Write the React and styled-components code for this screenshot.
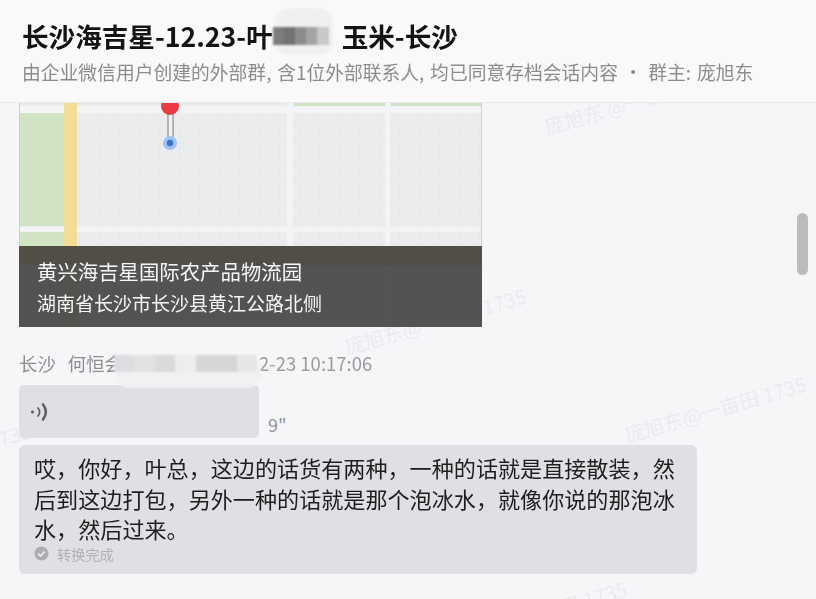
import React from "react";
import styled, { createGlobalStyle } from "styled-components";

const Global = createGlobalStyle`
  html, body { margin: 0; padding: 0; background: #f6f6f9; }
  * { box-sizing: border-box; }
  body { font-family: "Noto Sans CJK SC", "Noto Sans", sans-serif; overflow: hidden; }
`;

const Page = styled.div`
  width: 816px;
  height: 599px;
  display: flex;
  flex-direction: column;
  position: relative;
  overflow: hidden;
  background: #f6f6f9;
`;

const Header = styled.header`
  height: 103px;
  flex: none;
  padding: 17px 22px 0;
  background: #f9f9fa;
  border-bottom: 1px solid #e9e9eb;
  position: relative;
  z-index: 3;
`;

const Title = styled.h1`
  margin: 0;
  height: 38px;
  display: flex;
  align-items: center;
  font-size: 26.6px;
  line-height: 38px;
  font-weight: 700;
  color: #141414;
  white-space: nowrap;
  filter: blur(0.35px);
`;

const Subtitle = styled.p`
  margin: 5px 0 0;
  font-size: 18.8px;
  line-height: 24px;
  word-spacing: 1.6px;
  color: #8b8c8e;
  white-space: nowrap;
  filter: blur(0.35px);
`;

const Mosaic = styled.span`
  display: inline-flex;
  align-items: center;
  position: relative;
  width: ${(p) => p.$width}px;
  margin-left: ${(p) => p.$before || 0}px;
  margin-right: ${(p) => p.$after || 0}px;
  height: ${(p) => p.$height}px;
  flex: none;
  filter: blur(1px);
  z-index: 1;
`;

const MosaicHalo = styled.i`
  position: absolute;
  left: 2px;
  right: -4px;
  top: ${(p) => p.$top}px;
  bottom: ${(p) => p.$bottom}px;
  border-radius: 14px;
  background: ${(p) => p.$color};
  z-index: -1;
`;

const MosaicCell = styled.i`
  display: block;
  flex: 1;
  height: 100%;
  background: ${(p) => p.$color};
`;

const Scroller = styled.main`
  flex: 1;
  min-height: 0;
  padding: 0 0 0 19px;
  position: relative;
  overflow: hidden;
`;

const MapCard = styled.section`
  width: 463px;
  height: 224px;
  position: relative;
  overflow: hidden;
  background: #ebecee;
  z-index: 1;
`;

const MapArt = styled.svg`
  display: block;
  width: 463px;
  height: 224px;
  filter: blur(0.5px);
`;

const MapCaption = styled.div`
  position: absolute;
  left: 0;
  right: 0;
  bottom: 0;
  height: 81px;
  padding: 11px 18px 0;
  background: rgba(66, 66, 68, 0.9);
  color: #f6f6f6;
  filter: blur(0.25px);
`;

const PlaceName = styled.div`
  font-size: 20.4px;
  line-height: 28px;
  white-space: nowrap;
`;

const PlaceAddress = styled.div`
  font-size: 19px;
  line-height: 28px;
  margin-top: 4px;
  white-space: nowrap;
`;

const SenderRow = styled.div`
  display: flex;
  align-items: center;
  height: 28px;
  margin-top: 22px;
  font-size: 18.4px;
  color: #8d8e90;
  white-space: nowrap;
  position: relative;
  z-index: 2;
  filter: blur(0.3px);
`;

const SenderName = styled.span`
  margin-right: 12px;
`;

const Stamp = styled.span`
  font-size: 18.5px;
  color: #9b9c9e;
`;

const VoiceRow = styled.div`
  display: flex;
  align-items: flex-end;
  gap: 9px;
  margin-top: 8px;
  position: relative;
  z-index: 1;
`;

const VoiceBubble = styled.div`
  width: 240px;
  height: 53px;
  padding: 17px 0 0 11px;
  border-radius: 5px;
  background: #dfe0e3;
`;

const Duration = styled.span`
  font-size: 18px;
  line-height: 22px;
  color: #949597;
  margin-bottom: 3px;
`;

const TextBubble = styled.div`
  width: 678px;
  height: 129px;
  margin-top: 7px;
  padding: 7px 15px 0;
  border-radius: 6px;
  background: #dfe0e3;
  position: relative;
  z-index: 1;
`;

const Message = styled.p`
  margin: 0;
  font-size: 22.1px;
  line-height: 30.5px;
  color: #1e1e1e;
  filter: blur(0.3px);
`;

const Status = styled.div`
  display: flex;
  align-items: center;
  gap: 8px;
  margin-top: 1px;
  font-size: 14.2px;
  line-height: 18px;
  color: #b0b1b3;
  filter: blur(0.3px);
`;

const Watermark = styled.span`
  position: absolute;
  left: ${(p) => p.$x}px;
  top: ${(p) => p.$y}px;
  font-size: 20px;
  line-height: 24px;
  color: #ebebee;
  white-space: nowrap;
  transform: rotate(-16deg);
  transform-origin: left center;
  z-index: 0;
`;

const ScrollThumb = styled.div`
  position: absolute;
  left: 797px;
  top: 110px;
  width: 11px;
  height: 62px;
  border-radius: 6px;
  background: #bbbcbe;
  z-index: 2;
`;

const VoiceIcon = () => (
  <svg width="20" height="20" viewBox="0 0 20 20" fill="none" aria-hidden="true">
    <circle cx="2.5" cy="10" r="1.6" fill="#5f6062" />
    <path d="M8 6c2 2.5 2 5.5 0 8" stroke="#5f6062" strokeWidth="1.8" strokeLinecap="round" />
    <path d="M13 2.5c3.8 4.5 3.8 10.5 0 15" stroke="#5f6062" strokeWidth="2.6" strokeLinecap="round" />
  </svg>
);

const CheckIcon = () => (
  <svg width="15" height="15" viewBox="0 0 15 15" aria-hidden="true">
    <circle cx="7.5" cy="7.5" r="7" fill="#adaeb0" />
    <path d="M4.2 7.6l2.4 2.4 4-4.4" fill="none" stroke="#eeeeef" strokeWidth="1.6" />
  </svg>
);

const MapDrawing = () => (
  <MapArt viewBox="0 0 463 224" aria-hidden="true">
    <defs>
      <pattern id="blocks" width="20" height="20" patternUnits="userSpaceOnUse">
        <path d="M20 0H0V20" fill="none" stroke="#e3e4e6" strokeWidth="1" />
      </pattern>
    </defs>
    <rect width="463" height="224" fill="#ebecee" />
    <rect width="463" height="224" fill="url(#blocks)" />
    <rect x="0" y="10" width="45" height="113" fill="#d0e4c5" />
    <rect x="0" y="128" width="45" height="96" fill="#d0e4c5" />
    <rect x="0" y="3" width="463" height="7" fill="#f4f4f6" />
    <rect x="0" y="124" width="463" height="5" fill="#f4f4f6" />
    <rect x="268" y="0" width="6" height="224" fill="#f4f4f6" />
    <rect x="366" y="0" width="5" height="224" fill="#f4f4f6" />
    <rect x="275" y="0" width="91" height="3" fill="#d0e4c5" />
    <rect x="372" y="0" width="91" height="3" fill="#d0e4c5" />
    <rect x="45" y="0" width="13" height="224" fill="#f4dc97" />
    <rect x="0" y="143" width="463" height="19" fill="#d8b860" />
    <rect x="149" y="10" width="5" height="28" fill="#f2f2f2" stroke="#777" strokeWidth="1" />
    <circle cx="151" cy="40" r="7" fill="#9fc3f3" />
    <circle cx="151" cy="40" r="3.2" fill="#3e72c6" />
    <circle cx="151" cy="3" r="9" fill="#ea3a42" />
    <rect x="462" y="0" width="1" height="224" fill="#cfd0d2" />
    <rect x="0" y="0" width="1" height="224" fill="#cfd0d2" />
  </MapArt>
);

const titleBlur = ["#7d7d7d", "#6f7375", "#8c8c8c", "#a4a4a4", "#c8c8c8"];
const nameBlur = ["#dddddf", "#e2e2e4", "#dadadc", "#ecedef", "#d6d6d8", "#d6d6d8", "#e6e6e8"];
const messageText =
  "哎\uFF0C你好\uFF0C叶总\uFF0C这边的话货有两种\uFF0C一种的话就是直接散装\uFF0C然后到这边打包\uFF0C另外一种的话就是那个泡冰水\uFF0C就像你说的那泡冰水\uFF0C然后过来\u3002";

export default function App() {
  return (
    <Page>
      <Global />
      <Header>
        <Title>
          长沙海吉星-12.23-叶
          <Mosaic $width={56} $height={18} $after={13}>
            <MosaicHalo $top={-19} $bottom={-10} $color="#f0f0f0" />
            {titleBlur.map((c, i) => <MosaicCell key={i} $color={c} />)}
          </Mosaic>
          玉米-长沙
        </Title>
        <Subtitle>由企业微信用户创建的外部群, 含1位外部联系人, 均已同意存档会话内容 · 群主: 庞旭东</Subtitle>
      </Header>
      <Scroller>
        <Watermark $x={545} $y={12}>庞旭东 @一亩田 1735</Watermark>
        <Watermark $x={345} $y={232}>庞旭东@一亩田 1735</Watermark>
        <Watermark $x={625} $y={320}>庞旭东@一亩田 1735</Watermark>
        <Watermark $x={446} $y={525}>庞旭东@一亩田 1735</Watermark>
        <Watermark $x={-150} $y={367}>庞旭东@一亩田 1735</Watermark>
        <MapCard>
          <MapDrawing />
          <MapCaption>
            <PlaceName>黄兴海吉星国际农产品物流园</PlaceName>
            <PlaceAddress>湖南省长沙市长沙县黄江公路北侧</PlaceAddress>
          </MapCaption>
        </MapCard>
        <SenderRow>
          <SenderName>长沙</SenderName>
          何恒会
          <Mosaic $width={143} $height={17} $before={-9} $after={2}>
            <MosaicHalo $top={0} $bottom={-16} $color="#f1f1f3" />
            {nameBlur.map((c, i) => <MosaicCell key={i} $color={c} />)}
          </Mosaic>
          <Stamp>2-23 10:17:06</Stamp>
        </SenderRow>
        <VoiceRow>
          <VoiceBubble><VoiceIcon /></VoiceBubble>
          <Duration>9"</Duration>
        </VoiceRow>
        <TextBubble>
          <Message>{messageText}</Message>
          <Status><CheckIcon />转换完成</Status>
        </TextBubble>
        <ScrollThumb />
      </Scroller>
    </Page>
  );
}
